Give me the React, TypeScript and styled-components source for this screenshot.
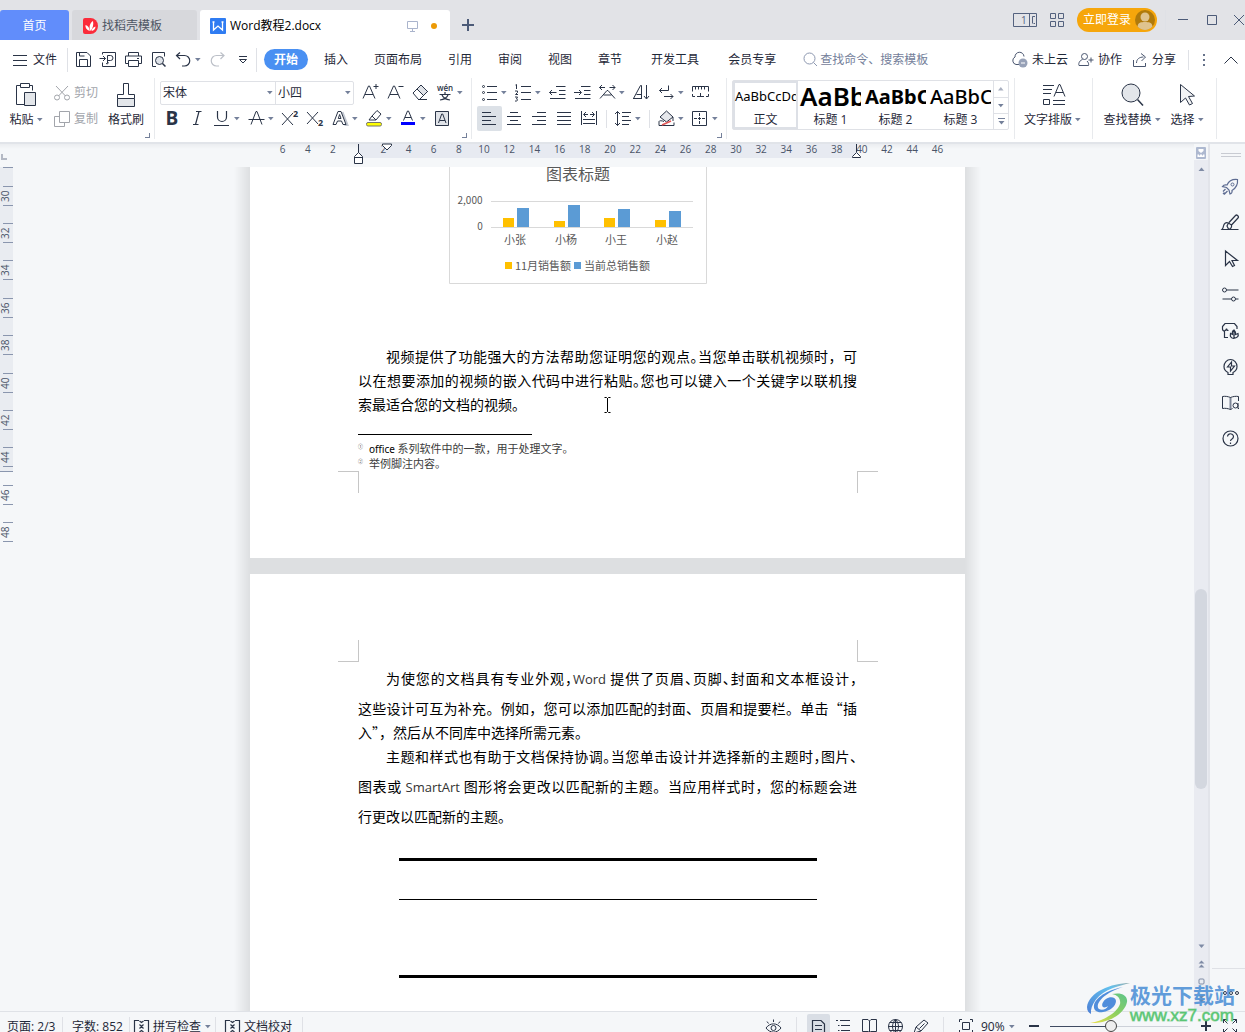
import React from "react";
import styled, { createGlobalStyle, css } from "styled-components";

const INK = "#2a3447";
const MUTED = "#74809a";
const LINE = "#dfe1e6";
const UI = '"Open Sans", "Noto Sans CJK SC", sans-serif';
const DOC = '"Noto Sans CJK SC", sans-serif';

const Global = createGlobalStyle`
  * { box-sizing: border-box; }
  body { margin: 0; overflow: hidden; font-family: ${UI}; font-size: 12px; line-height: 18px; color: #1f2838; }
  button, input, select { font: inherit; color: inherit; margin: 0; padding: 0; border: 0; background: none; }
  svg { display: block; flex: none; }
`;

const Shell = styled.div`
  position: relative;
  height: 100vh;
  display: flex;
  flex-direction: column;
  overflow: hidden;
  background: #f5f7f9;
`;

/* ---------- shared pieces ---------- */

const Svg = styled.svg<{ $tone?: string }>`
  fill: none;
  stroke: ${(p) => p.$tone ?? INK};
  stroke-width: 1;
  overflow: visible;
  text { stroke: none; fill: ${(p) => p.$tone ?? INK}; font-family: ${UI}; }
`;

type IconProps = { w?: number; h?: number; tone?: string; children: React.ReactNode };
const Icon = ({ w = 21, h = 21, tone, children }: IconProps) => (
  <Svg width={w} height={h} viewBox={`0 0 ${w} ${h}`} $tone={tone} aria-hidden="true">
    {children}
  </Svg>
);

const Caret = () => (
  <svg width="6" height="4" viewBox="0 0 6 4" aria-hidden="true">
    <path d="M0 0h5.600L2.800 3.200z" fill={MUTED} />
  </svg>
);

const ToolButton = styled.button<{ $active?: boolean; $split?: boolean }>`
  width: ${(p) => (p.$split ? 34 : 25)}px;
  height: 25px;
  padding: 0 2px;
  display: flex;
  align-items: center;
  flex: none;
  gap: 1px;
  ${(p) => p.$active && css`background: #dce1e7; border-radius: 2px;`}
`;

type ToolProps = { label: string; split?: boolean; active?: boolean; children: React.ReactNode };
const Tool = ({ label, split, active, children }: ToolProps) => (
  <ToolButton type="button" aria-label={label} $split={split} $active={active}>
    {children}
    {split && <Caret />}
  </ToolButton>
);

const VRule = styled.span<{ $h?: number; $gap?: number }>`
  flex: none;
  width: 1px;
  height: ${(p) => p.$h ?? 18}px;
  margin: 0 ${(p) => p.$gap ?? 4}px;
  background: ${LINE};
`;

/* ---------- title bar ---------- */

const TitleBar = styled.header`
  flex: none;
  height: 40px;
  display: flex;
  justify-content: space-between;
  background: #e2e3e7;
  overflow: hidden;
`;
const Tabs = styled.nav`
  display: flex;
  align-items: flex-end;
  gap: 3px;
`;
const FileTab = styled.button<{ $kind: "home" | "idle" | "open" }>`
  height: 30px;
  padding-top: 1px;
  display: flex;
  align-items: center;
  gap: 4px;
  border-radius: 3px 3px 0 0;
  ${(p) => p.$kind === "home" && css`width: 69px; justify-content: center; color: #fff; background: #618dfb;`}
  ${(p) => p.$kind === "idle" && css`width: 125px; padding-left: 11px; color: #4d5563; background: #d7d8dc;`}
  ${(p) => p.$kind === "open" && css`width: 250px; padding: 1px 12px 0 10px; background: #fff; color: #000;`}
`;
const TabState = styled.span`
  margin-left: auto;
  display: flex;
  align-items: center;
  gap: 12px;
`;
const NewTab = styled.button`
  width: 30px;
  height: 30px;
  display: grid;
  place-items: center;
`;
const WindowTools = styled.div`
  display: flex;
  align-items: center;
  margin-right: -9px;
`;
const PlainButton = styled.button<{ $w: number }>`
  width: ${(p) => p.$w}px;
  height: 28px;
  display: grid;
  place-items: center;
  flex: none;
`;
const Login = styled.button`
  width: 80px;
  height: 24px;
  margin: 0 8px 0 5px;
  padding: 0 2px 0 6px;
  display: flex;
  align-items: center;
  justify-content: space-between;
  border-radius: 12px;
  background: #f6a60b;
  color: #fff;
  white-space: nowrap;
`;

const TitleArea = () => (
  <TitleBar>
    <Tabs>
      <FileTab type="button" $kind="home">首页</FileTab>
      <FileTab type="button" $kind="idle">
        <svg width="15" height="16" viewBox="0 0 15 16" aria-hidden="true">
          <path d="M0 2Q0 0 2 0h5.500a7.500 8 0 0 1 0 16H2Q0 16 0 14z" fill="#fb2b3a" />
          <path d="M7.600 13C5.500 9 7 5 10 3c.8 4-.2 7-2.400 10zM6.800 13C3.500 12 2 9.500 2.500 7c2.500.5 4 3 4.300 6zM8.500 13c.3-2 1.600-4 4-4.500 0 2.500-1.500 4.300-4 4.500z" fill="#fff" />
        </svg>
        找稻壳模板
      </FileTab>
      <FileTab type="button" $kind="open">
        <svg width="16" height="16" viewBox="0 0 16 16" aria-hidden="true">
          <rect width="16" height="16" rx="1" fill="#2f7cf2" />
          <path d="M2.500 4h2M3.500 4v8l4.500-4 4.500 4V4M11.500 4h2" fill="none" stroke="#fff" strokeWidth="1.300" />
        </svg>
        Word教程2.docx
        <TabState>
          <Icon w={12} h={12} tone="#aab4cc"><path d="M.5 1.500h10v7H.5zM5.500 9v2M3 11.500h5" /></Icon>
          <svg width="7" height="6" viewBox="0 0 7 6" aria-hidden="true"><circle cx="3" cy="3" r="3" fill="#ec9a05" /></svg>
        </TabState>
      </FileTab>
      <NewTab type="button" aria-label="新建标签">
        <Icon w={12} h={12} tone="#4c5b78"><path d="M6 0v12M0 6h12" strokeWidth="2" /></Icon>
      </NewTab>
    </Tabs>
    <WindowTools>
      <PlainButton type="button" aria-label="窗口布局" $w={34}>
        <Icon w={24} h={14} tone="#54627f">
          <path d="M.5.5h23v13H.5zM16.500.5v13M22 3.500h-2.500v7M20.500 10.500h1.500" />
          <text x="8" y="11" fontSize="10">1</text>
        </Icon>
      </PlainButton>
      <PlainButton type="button" aria-label="应用" $w={30}>
        <Icon w={14} h={14} tone="#54627f"><path d="M.5.5h5v5h-5zM8.500.5h5v5h-5zM.5 8.500h5v5h-5zM8.500 8.500h5v5h-5z" /></Icon>
      </PlainButton>
      <Login type="button">
        立即登录
        <svg width="20" height="20" viewBox="0 0 20 20" aria-hidden="true">
          <circle cx="10" cy="10" r="10" fill="#b07a0b" />
          <circle cx="10" cy="7" r="4.500" fill="#dfc38f" />
          <path d="M2.500 16.500C3 12.500 6 12 10 12s7 .5 7.500 4.500A10 10 0 0 1 2.500 16.500z" fill="#dfc38f" />
        </svg>
      </Login>
      <VRule $h={20} $gap={0} />
      <PlainButton type="button" aria-label="最小化" $w={34}>
        <Icon w={10} h={10} tone="#4c5b78"><path d="M0 4.500h10" /></Icon>
      </PlainButton>
      <PlainButton type="button" aria-label="最大化" $w={24}>
        <Icon w={10} h={10} tone="#4c5b78"><path d="M.5.500h9v9h-9z" /></Icon>
      </PlainButton>
      <PlainButton type="button" aria-label="关闭" $w={30}>
        <Icon w={10} h={10} tone="#4c5b78"><path d="M0 0l10 10M10 0L0 10" /></Icon>
      </PlainButton>
    </WindowTools>
  </TitleBar>
);

/* ---------- menu bar ---------- */

const MenuBar = styled.div`
  flex: none;
  height: 38px;
  padding-top: 1px;
  display: flex;
  align-items: center;
  background: #fff;
  white-space: nowrap;
`;
const FileMenu = styled.button`
  display: flex;
  align-items: center;
  gap: 6px;
  padding: 0 10px 0 13px;
`;
const MenuTab = styled.button<{ $wide?: boolean }>`
  height: 25px;
  padding: 1px 13px 0 ${(p) => (p.$wide ? 16 : 13)}px;
`;
const ActiveTab = styled.button`
  width: 44px;
  height: 21px;
  margin: 0 3px 0 6px;
  border-radius: 11px;
  background: #4a90f2;
  color: #fff;
  font-weight: 700;
`;
const Search = styled.label`
  display: flex;
  align-items: center;
  flex: 1;
  gap: 2px;
  margin-left: 14px;
  input { flex: 1; min-width: 60px; width: 60px; outline: 0; }
  input::placeholder { color: ${MUTED}; opacity: 1; }
`;
const Share = styled.button`
  display: flex;
  align-items: center;
  gap: 4px;
  margin-right: 10px;
`;

const MenuArea = () => (
  <MenuBar>
    <FileMenu type="button">
      <Icon w={14} h={12}><path d="M0 1.500h14M0 6.500h14M0 11.500h14" /></Icon>
      文件
    </FileMenu>
    <VRule $h={24} $gap={0} />
    <VRule $h={0} $gap={1} />
    <Tool label="保存"><Icon><path d="M3.500 3.500h10.500l3.500 3.500v10.500h-14zM6.500 17.500V10.500h8v7M6.500 3.500v3.500h5" /></Icon></Tool>
    <Tool label="输出为PDF"><Icon><path d="M4.500 5.500v-2h13v14h-13v-4M1.500 9.500h6M5 7l2.500 2.500L5 12M9.500 14V6.500h3a2 2 0 0 1 0 5h-3M8 14.500c2 1 3-.5 1.500-2" /></Icon></Tool>
    <Tool label="打印"><Icon><path d="M5.500 7v-3.500h10v3.500M5.500 14.500h-3v-7.500h16v7.500h-3M5.500 11.500h10v6h-10zM14 9.500h2" /></Icon></Tool>
    <Tool label="打印预览"><Icon><path d="M8 17.500H4.500v-14h12v4" /><circle cx="11.500" cy="11.500" r="4" fill="#dfe3e9" /><path d="M14.500 14.500l3 3" strokeWidth="1.500" /></Icon></Tool>
    <Tool label="撤销" split><Icon><path d="M7 3.500L3.500 6.500 7 10M4 6.500h7.500a5 5 0 0 1 0 10.500H9" strokeWidth="1.200" /></Icon></Tool>
    <Tool label="恢复"><Icon tone="#bcc0c8"><path d="M13.500 3.500L17 6.500 13.500 10M16.500 6.500H9.500a5 5 0 0 0 0 10.500H12" strokeWidth="1.200" /></Icon></Tool>
    <Tool label="更多"><Icon><path d="M7 7.500h8M7.500 10.500l3.500 3.500 3.500-3.500z" /></Icon></Tool>
    <VRule $h={24} $gap={1} />
    <ActiveTab type="button">开始</ActiveTab>
    <MenuTab type="button">插入</MenuTab>
    <MenuTab type="button">页面布局</MenuTab>
    <MenuTab type="button">引用</MenuTab>
    <MenuTab type="button">审阅</MenuTab>
    <MenuTab type="button">视图</MenuTab>
    <MenuTab type="button">章节</MenuTab>
    <MenuTab type="button" $wide>开发工具</MenuTab>
    <MenuTab type="button" $wide>会员专享</MenuTab>
    <Search>
      <Icon w={15} h={15} tone="#8d98b0"><circle cx="6.500" cy="6.500" r="5.500" /><path d="M10.500 10.500l3.500 3.500" /></Icon>
      <input type="text" placeholder="查找命令、搜索模板" aria-label="查找命令" />
    </Search>
    <Share type="button">
      <Icon w={17} h={16} tone="#4a566f">
        <path d="M9 12.500H5A4 4 0 0 1 4 5a4.500 4.500 0 0 1 9-.5" />
        <circle cx="12" cy="11" r="4.500" fill="#97a1b7" stroke="none" />
        <path d="M10 11h4" stroke="#fff" />
      </Icon>
      未上云
    </Share>
    <Share type="button">
      <Icon w={16} h={16} tone="#4a566f"><circle cx="6.500" cy="4.500" r="3" /><path d="M4.500 7.500c-4 1.500-4 5-3.500 6h9.500c.4-1.500 0-3-1.500-4.500M13 5.500v5M10.500 8h5" /></Icon>
      协作
    </Share>
    <Share type="button">
      <Icon w={16} h={16} tone="#4a566f"><path d="M1.500 8v6.500h12V11M4.500 11c0-4 3-6 7-6M9 1.500L13.500 5 9.500 9" /></Icon>
      分享
    </Share>
    <VRule $h={20} $gap={2} />
    <PlainButton type="button" aria-label="更多选项" $w={26}>
      <svg width="2" height="12" viewBox="0 0 2 12" aria-hidden="true"><path d="M0 0h2v2H0zM0 5h2v2H0zM0 10h2v2H0z" fill="#66728a" /></svg>
    </PlainButton>
    <PlainButton type="button" aria-label="收起功能区" $w={28}>
      <Icon w={14} h={8}><path d="M.5 7.500L7 1l6.500 6.500" /></Icon>
    </PlainButton>
  </MenuBar>
);

/* ---------- ribbon ---------- */

const Ribbon = styled.div`
  flex: none;
  height: 64px;
  display: flex;
  background: #fff;
  overflow: hidden;
  white-space: nowrap;
`;
const Group = styled.section<{ $l: number; $r: number }>`
  flex: none;
  height: 61px;
  padding: 2px ${(p) => p.$r}px 0 ${(p) => p.$l}px;
  border-right: 1px solid #e8eaed;
`;
const GroupBody = styled.div`
  display: flex;
  height: 52px;
`;
const Rows = styled.div`
  display: grid;
  grid-template-rows: 26px 26px;
`;
const ToolRow = styled.div`
  display: flex;
  align-items: center;
  height: 25px;
`;
const Launcher = styled.button`
  display: block;
  width: 5px;
  height: 5px;
  margin: 1px 0 0 auto;
  border-right: 1px solid ${MUTED};
  border-bottom: 1px solid ${MUTED};
`;
const BigButton = styled.button<{ $w: number }>`
  width: ${(p) => p.$w}px;
  padding-top: 2px;
  display: flex;
  flex-direction: column;
  align-items: center;
`;
const BigLabel = styled.span`
  height: 24px;
  display: flex;
  align-items: center;
  gap: 3px;
`;
const SmallButton = styled.button`
  width: 50px;
  height: 25px;
  padding-left: 2px;
  display: flex;
  align-items: center;
  gap: 4px;
  color: #a2a5ab;
`;
const FontBox = styled.div`
  display: flex;
  height: 24px;
  margin-right: 4px;
  border: 1px solid ${LINE};
  border-radius: 2px;
`;
const Field = styled.label<{ $w: number }>`
  width: ${(p) => p.$w}px;
  padding: 0 2px;
  display: flex;
  align-items: center;
  & + & { border-left: 1px solid ${LINE}; }
  select { flex: 1; min-width: 0; appearance: none; outline: 0; }
`;
const Gallery = styled.div`
  display: flex;
  width: 277px;
  height: 50px;
  border: 1px solid ${LINE};
  border-radius: 2px;
`;
const StyleCard = styled.button<{ $selected?: boolean }>`
  width: 65px;
  overflow: hidden;
  display: grid;
  grid-template-rows: 31px 17px;
  line-height: 16px;
  ${(p) => p.$selected && css`box-shadow: inset 0 0 0 2px #dde0e6;`}
`;
const Sample = styled.span<{ $size: number; $weight: number }>`
  padding-left: 2px;
  margin-right: 2px;
  overflow: hidden;
  text-align: left;
  line-height: 31px;
  color: #000;
  font-family: "Noto Sans", sans-serif;
  font-size: ${(p) => p.$size}px;
  font-weight: ${(p) => p.$weight};
`;
const GalleryNav = styled.div`
  width: 15px;
  display: grid;
  grid-template-rows: 16px 16px 16px;
  border-left: 1px solid ${LINE};
  button { display: grid; place-items: center; }
  button + button { border-top: 1px solid ${LINE}; }
`;

const RibbonArea = () => (
  <Ribbon>
    <Group $l={3} $r={4} aria-label="剪贴板">
      <GroupBody>
        <BigButton type="button" $w={46}>
          <Icon w={26} h={26}>
            <path d="M12 22.500H3.500v-19h4M16.500 3.500h3v5M7.500 1.500h9v4h-9z" />
            <path d="M11.500 10.500h11v13h-11z" fill="#e3e6ea" />
          </Icon>
          <BigLabel>粘贴<Caret /></BigLabel>
        </BigButton>
        <VRule $h={0} $gap={1} />
        <Rows>
          <SmallButton type="button">
            <Icon w={16} h={16} tone="#a2a5ab"><path d="M2 1l9.500 10M14 1L4.500 11" /><circle cx="3" cy="12.500" r="2.500" /><circle cx="13" cy="12.500" r="2.500" /></Icon>
            剪切
          </SmallButton>
          <SmallButton type="button">
            <Icon w={16} h={16} tone="#a2a5ab"><path d="M5.500.5h10v11h-10zM5.500 5.500h-5v10h10v-4" /></Icon>
            复制
          </SmallButton>
        </Rows>
        <BigButton type="button" $w={48}>
          <Icon w={26} h={26}>
            <path d="M4.500 16.500h17v8h-17z" fill="#e3e6ea" />
            <path d="M4.500 16.500v-4h6V1.500h5v11h6v4" />
          </Icon>
          <BigLabel>格式刷</BigLabel>
        </BigButton>
      </GroupBody>
      <Launcher type="button" aria-label="剪贴板设置" />
    </Group>

    <Group $l={5} $r={4} aria-label="字体">
      <GroupBody>
        <Rows>
          <ToolRow>
            <FontBox>
              <Field $w={114}>
                <select aria-label="字体"><option>宋体</option></select>
                <Caret />
              </Field>
              <Field $w={78}>
                <select aria-label="字号"><option>小四</option></select>
                <Caret />
              </Field>
            </FontBox>
            <Tool label="增大字号"><Icon><path d="M3 16.500L8.500 4h1L15 16.500M5 12.500h8M13.500 4.500h5M16 2v5" /></Icon></Tool>
            <Tool label="减小字号"><Icon><path d="M3 16.500L8.500 4h1L15 16.500M5 12.500h8M13.500 4.500h5" /></Icon></Tool>
            <Tool label="清除格式"><Icon><path d="M7 7l4-4 6.500 6.500-4 4z" fill="#dfe2e7" /><path d="M3 11l8-8 6.500 6.500-8 8H8.500zM7 7l6.500 6.500M8 17.500h9" /></Icon></Tool>
            <Tool label="拼音指南" split>
              <Icon>
                <text x="10" y="9" fontSize="8" fontWeight="600" textAnchor="middle">wén</text>
                <path d="M10 10v2.500M4.500 12.500h11M7 13c1 2.500 4 4.500 8 5M13 13c-1 2.500-4 4.500-8 5" strokeWidth="1.200" />
              </Icon>
            </Tool>
          </ToolRow>
          <ToolRow>
            <Tool label="加粗"><Icon><text x="10" y="17" fontSize="19" fontWeight="700" textAnchor="middle">B</text></Icon></Tool>
            <Tool label="倾斜"><Icon><path d="M9 3.500h5.500M6 16.500h5.500M12 3.500L8.500 16.500" strokeWidth="1.200" /></Icon></Tool>
            <Tool label="下划线" split><Icon><path d="M5.500 3v6a4 4 0 0 0 9 0V3M2 17.500h15" strokeWidth="1.200" /></Icon></Tool>
            <Tool label="删除线" split><Icon><path d="M5 16.500L10 3.500h1l5 13M2.500 11.500h16" /></Icon></Tool>
            <Tool label="上标"><Icon><path d="M2 5l11 12M13 5L2 17" /><text x="13" y="8.500" fontSize="9" fontWeight="700">2</text></Icon></Tool>
            <Tool label="下标"><Icon><path d="M2 4l11 12M13 4L2 16" /><text x="13" y="18" fontSize="9" fontWeight="700">2</text></Icon></Tool>
            <Tool label="文字效果" split>
              <Icon><path d="M12.500 4l5 13h-3" stroke="#c3c8d1" strokeWidth="2" /><path d="M3 16.500L8 3.500h3l5 13h-3l-1.500-3.500h-4L6 16.500zM8.300 10.500h2.700L9.600 6.500z" fill="#fff" fillRule="evenodd" /></Icon>
            </Tool>
            <Tool label="突出显示" split>
              <Icon><rect x="2.500" y="14.500" width="15" height="3.500" rx="1.500" fill="#ffff00" stroke="#77776b" /><path d="M8 8l5-5.500L17 6l-5 6zM8 8l4 4H5z" fill="#fff" /></Icon>
            </Tool>
            <Tool label="字体颜色" split><Icon><path d="M5.500 12.500L9.500 3h1l4 9.500M7 9.500h6" /><rect x="3" y="14" width="14" height="3" fill="#0000ff" stroke="none" /></Icon></Tool>
            <Tool label="字符底纹"><Icon><path d="M3.500 3.500h13v14h-13z" fill="#e0e3e8" /><path d="M6.500 15L9.700 6h1l3.300 9M8 12.500h5" /></Icon></Tool>
          </ToolRow>
        </Rows>
      </GroupBody>
      <Launcher type="button" aria-label="字体设置" />
    </Group>

    <Group $l={5} $r={4} aria-label="段落">
      <GroupBody>
        <Rows>
          <ToolRow>
            <Tool label="项目符号" split><Icon><path d="M8 4.500h10M8 10.500h10M8 17.500h10" /><circle cx="4.500" cy="4.500" r="1" /><circle cx="4.500" cy="10.500" r="1" /><circle cx="4.500" cy="17.500" r="1" /></Icon></Tool>
            <Tool label="编号" split>
              <Icon><path d="M8 4.500h10M8 10.500h10M8 17.500h10M2.500 3l1-.5V7M2 9h2.500v1.500l-2 2H5M2 15h2.500L3.500 17c2 .5 1 2.500-1.500 2" /></Icon>
            </Tool>
            <Tool label="减少缩进"><Icon><path d="M9 4.500h9.500M12 8.500h6.500M12 12.500h6.500M3 16.500h15.500M2.500 10.500h7M5 8l-2.500 2.500L5 13" /></Icon></Tool>
            <Tool label="增加缩进"><Icon><path d="M9 4.500h9.500M12 8.500h6.500M12 12.500h6.500M3 16.500h15.500M2 10.500h7M7 8l2.500 2.500L7 13" /></Icon></Tool>
            <Tool label="中文版式" split><Icon><path d="M2.500 5.500H8M12.500 5.500h5.500M5 3L2.500 5.500 5 8M15.500 3L18 5.500 15.500 8M3 16.500l7-8h1l7 8M6.500 13h8" /></Icon></Tool>
            <Tool label="排序"><Icon><path d="M2.500 16.500L9.500 3.500h1v13M5.500 12.500h5M2 16.500h9M15.500 3v13.500M13 14l2.500 3L18 14" /></Icon></Tool>
            <Tool label="显示编辑标记" split><Icon><path d="M12.500 3.500v5h-9M6 6L3.500 8.500 6 11M8 14.500h9M14.500 12l2.500 2.500-2.500 2.500" /></Icon></Tool>
            <Tool label="制表位"><Icon><path d="M2.500 9.500v-5h16v5M5.500 4.500v3M8.500 4.500v3M11.500 4.500v3M14.500 4.500v3M2.500 12v2.500H5M7 14.500h7M10.500 11v3.500M16 14.500h2.500V12" /></Icon></Tool>
          </ToolRow>
          <ToolRow>
            <Tool label="左对齐" active><Icon><path d="M3 4.500h9M3 8.500h14M3 12.500h9M3 16.500h14" /></Icon></Tool>
            <Tool label="居中"><Icon><path d="M6 4.500h8M3 8.500h14M6 12.500h8M3 16.500h14" /></Icon></Tool>
            <Tool label="右对齐"><Icon><path d="M8 4.500h9M3 8.500h14M8 12.500h9M3 16.500h14" /></Icon></Tool>
            <Tool label="两端对齐"><Icon><path d="M3 4.500h14M3 8.500h14M3 12.500h14M3 16.500h14" /></Icon></Tool>
            <Tool label="分散对齐"><Icon><path d="M2.500 3v14M17.500 3v14M5 6.500h4M11 6.500h4M7 4L4.500 6.500 7 9M13 4l2.500 2.500L13 9M4 11.500h12M4 15.500h12" /></Icon></Tool>
            <VRule />
            <Tool label="行距" split><Icon><path d="M4.500 3.500v14M2 6l2.500-2.500L7 6M2 15l2.500 2.500L7 15M9 4.500h9M9 8.500h7M9 12.500h9M9 16.500h7" /></Icon></Tool>
            <VRule />
            <Tool label="底纹颜色" split><Icon><path d="M4 9l6.500-6L17 9l-6.500 5z" fill="#e6e8ec" /><path d="M17 9v4M3 13.500c0-1 3-1 5 0M3 13.500v4h15v-3" /><path d="M6 17l9-4" stroke="#e25555" strokeWidth="1.500" /></Icon></Tool>
            <Tool label="边框" split><Icon><path d="M2.500 3.500h14v14h-14z" /><path d="M9.500 5v11M4 10.500h11" strokeDasharray="3 1" /></Icon></Tool>
          </ToolRow>
        </Rows>
      </GroupBody>
      <Launcher type="button" aria-label="段落设置" />
    </Group>

    <Group $l={5} $r={5} aria-label="样式">
      <Gallery>
        <StyleCard type="button" $selected><Sample $size={13} $weight={400}>AaBbCcDd</Sample>正文</StyleCard>
        <StyleCard type="button"><Sample $size={26} $weight={600}>AaBb</Sample>标题 1</StyleCard>
        <StyleCard type="button"><Sample $size={20} $weight={700}>AaBbC</Sample>标题 2</StyleCard>
        <StyleCard type="button"><Sample $size={20} $weight={500}>AaBbC</Sample>标题 3</StyleCard>
        <GalleryNav>
          <button type="button" aria-label="上一行"><svg width="6" height="4" viewBox="0 0 6 4"><path d="M0 3.500h5.600L2.800 0z" fill="#a9b0c0" /></svg></button>
          <button type="button" aria-label="下一行"><Caret /></button>
          <button type="button" aria-label="更多样式"><svg width="7" height="7" viewBox="0 0 7 7"><path d="M0 0h7v1H0zM.5 3h6L3.500 6.500z" fill={MUTED} /></svg></button>
        </GalleryNav>
      </Gallery>
    </Group>

    <Group $l={3} $r={5} aria-label="排版">
      <BigButton type="button" $w={69}>
        <Icon w={26} h={26}><path d="M3 3.500h11M3 7.500h9M3 11.500h8M3.500 17.500h6v5h-6zM14 14.500L19 2.500h1l5 12M16 10.500h7M13 18.500h12M13 22.500h12" /></Icon>
        <BigLabel>文字排版<Caret /></BigLabel>
      </BigButton>
    </Group>

    <Group $l={8} $r={5} aria-label="编辑">
      <GroupBody>
        <BigButton type="button" $w={62}>
          <Icon w={26} h={26}><circle cx="12" cy="11" r="9" fill="#e3e6ea" /><path d="M18.500 17.500l5.500 6" strokeWidth="1.500" /></Icon>
          <BigLabel>查找替换<Caret /></BigLabel>
        </BigButton>
        <BigButton type="button" $w={48}>
          <Icon w={26} h={26}><path d="M6.500 2.500v18l5-4.500 4 7 3-1.500-4-7 6-.5z" fill="#f2f3f5" /></Icon>
          <BigLabel>选择<Caret /></BigLabel>
        </BigButton>
      </GroupBody>
    </Group>
  </Ribbon>
);

/* ---------- rulers ---------- */

const Work = styled.div`
  flex: 1;
  min-height: 0;
  display: flex;
  border-top: 2px solid #e1e4e9;
`;
const Main = styled.main`
  flex: 1;
  min-width: 0;
  display: flex;
  flex-direction: column;
`;
const TopRuler = styled.div`
  flex: none;
  height: 23px;
  padding-left: 21px;
  position: relative;
  display: flex;
  justify-content: center;
  background: linear-gradient(#ebedf0, #f5f7f9 5px);
`;
const RulerCorner = styled.span`
  position: absolute;
  left: 1px;
  bottom: 7px;
  width: 6px;
  height: 6px;
  border-left: 2px solid #b4b9c4;
  border-bottom: 2px solid #b4b9c4;
`;
const Track = styled.div`
  position: relative;
  width: 715px;
  height: 14px;
  padding: 0 15px 0 20px;
  display: grid;
  grid-template-columns: repeat(27, 1fr);
  background: linear-gradient(to right, transparent 108px, #e7eaf1 108px, #e7eaf1 608px, transparent 608px);
  color: #4a5468;
  font-size: 10px;
  line-height: 11px;
  text-align: center;
`;
const Marker = styled.span<{ $x: number }>`
  position: absolute;
  left: ${(p) => p.$x}px;
  top: 0;
`;
const SideRuler = styled.div`
  flex: none;
  width: 13px;
  display: flex;
  flex-direction: column;
  background: linear-gradient(#e9ecf1 304px, #8a96ae 304px, #8a96ae 305px, #f5f7f9 305px);
`;
const Scale = styled.div`
  height: 384px;
  padding-top: 9px;
  display: grid;
  grid-template-rows: repeat(10, 1fr);
  align-items: center;
  border-top: 1px solid #8a96ae;
  margin-left: 3px;
  color: #4a5468;
  font-size: 10px;
`;
const Mark = styled.span`
  width: 10px;
  height: 20px;
  padding-left: 6px;
  display: grid;
  grid-template-rows: 4px;
  place-items: center;
  border: solid #8a96ae;
  border-width: 1px 0;
  writing-mode: vertical-rl;
  transform: rotate(180deg);
  line-height: 10px;
`;

const topNumbers = Array.from({ length: 27 }, (_, i) => Math.abs(i * 2 - 6));
const sideNumbers = [30, 32, 34, 36, 38, 40, 42, 44, 46, 48];

/* ---------- document ---------- */

const Desk = styled.div`
  flex: 1;
  min-height: 0;
  display: flex;
`;
const Canvas = styled.div`
  flex: 1;
  min-width: 0;
  padding-left: 8px;
  display: flex;
  justify-content: center;
  overflow: hidden;
`;
const Stack = styled.div`
  flex: none;
  width: 747px;
  padding: 0 16px;
  display: flex;
  flex-direction: column;
  gap: 16px;
  background: linear-gradient(to right, #f5f7f9, #dddfe1 16px, #dddfe1 calc(100% - 16px), #f5f7f9);
`;
const Page = styled.article<{ $top: number; $bottom: number }>`
  position: relative;
  padding: ${(p) => p.$top}px 0 ${(p) => p.$bottom}px;
  background: #fff;
  font-family: ${DOC};
  color: #000;
`;
const LastPage = styled(Page)`
  flex: 1;
`;
const Chart = styled.svg`
  margin-left: 199px;
  text { font-family: ${DOC}; fill: #595959; font-size: 11px; text-anchor: middle; }
`;
const Body = styled.div<{ $gap: number }>`
  margin: ${(p) => p.$gap}px 108px 0 108px;
`;
const TextLine = styled.p<{ $indent?: boolean; $loose?: boolean; $end?: boolean }>`
  margin: ${(p) => (p.$loose ? 6 : 0)}px 0 0;
  font-size: 14px;
  line-height: 24px;
  white-space: nowrap;
  text-indent: ${(p) => (p.$indent ? "2em" : "0")};
  text-align: justify;
  text-align-last: ${(p) => (p.$end ? "left" : "justify")};
`;
const Half = styled.span`
  font-feature-settings: "halt";
`;
const Latin = styled.span`
  font-family: "Open Sans", sans-serif;
  font-size: 13px;
  line-height: 13px;
  color: #333;
`;
const Corners = styled.div<{ $foot?: boolean }>`
  display: flex;
  justify-content: space-between;
  padding: 0 87px 0 88px;
  span {
    width: 21px;
    height: 22px;
    border: 0 solid #c6c6c6;
    border-${(p) => (p.$foot ? "top" : "bottom")}-width: 1px;
  }
  span:first-child { border-right-width: 1px; }
  span:last-child { border-left-width: 1px; }
`;
const NoteRule = styled.hr`
  width: 174px;
  height: 1px;
  margin: 18px 0 6px;
  border: 0;
  background: #000;
`;
const Note = styled.p`
  display: flex;
  gap: 6px;
  margin: 0;
  height: 15px;
  font-size: 11px;
  line-height: 15px;
  color: #3c3c3c;
  sup { font-size: 5px; line-height: 10px; width: 5px; }
  b { font-weight: 400; font-family: "Noto Sans", sans-serif; font-size: 10px; line-height: 10px; color: #000; }
`;
const RuledTable = styled.table`
  width: 418px;
  margin: 30px 0 0 149px;
  border-spacing: 0;
  border-top: 3px solid #000;
  border-bottom: 3px solid #000;
  td { padding: 0; }
`;
const Cell = styled.td<{ $h: number; $line?: boolean }>`
  height: ${(p) => p.$h}px;
  border-bottom: ${(p) => (p.$line ? "1px solid #000" : "0")};
`;
const Pointer = styled.svg`
  position: absolute;
  left: 354px;
  top: 230px;
`;

const people = [
  { name: "小张", x: 66, month: 9, total: 19 },
  { name: "小杨", x: 117, month: 6, total: 22 },
  { name: "小王", x: 167, month: 9, total: 18 },
  { name: "小赵", x: 218, month: 7, total: 16 },
];

const SalesChart = () => (
  <Chart width="259" height="117" viewBox="0 0 259 117" role="img" aria-label="图表标题">
    <path d="M.5 0v116.500h257V0" fill="none" stroke="#d9d9d9" />
    <text x="129" y="13" style={{ fontSize: 16 }}>图表标题</text>
    <path d="M42 34.500h202M42 60.500h202" stroke="#d9d9d9" />
    <text x="21" y="37" style={{ fontSize: 10 }}>2,000</text>
    <text x="31" y="63" style={{ fontSize: 10 }}>0</text>
    {people.map((p) => (
      <g key={p.name}>
        <rect x={p.x - 12} y={60 - p.month} width="11" height={p.month} fill="#ffc000" />
        <rect x={p.x + 2} y={60 - p.total} width="12" height={p.total} fill="#5b9bd5" />
        <text x={p.x} y="77">{p.name}</text>
      </g>
    ))}
    <rect x="56" y="95" width="7" height="7" fill="#ffc000" />
    <text x="94" y="103">11月销售额</text>
    <rect x="125" y="95" width="7" height="7" fill="#5b9bd5" />
    <text x="168" y="103">当前总销售额</text>
  </Chart>
);

const DocumentArea = () => (
  <Canvas lang="zh-CN">
    <Stack>
      <Page $top={0} $bottom={65}>
        <SalesChart />
        <Body $gap={60}>
          <TextLine $indent>视频提供了功能强大的方法帮助您证明您的观点<Half>。</Half>当您单击联机视频时，可</TextLine>
          <TextLine>以在想要添加的视频的嵌入代码中进行粘贴<Half>。</Half>您也可以键入一个关键字以联机搜</TextLine>
          <TextLine $end>索最适合您的文档的视频。</TextLine>
          <NoteRule />
          <Note><sup>①</sup><span><b>office</b> 系列软件中的一款，用于处理文字。</span></Note>
          <Note><sup>②</sup><span>举例脚注内容。</span></Note>
        </Body>
        <Corners $foot><span /><span /></Corners>
        <Pointer width="8" height="16" viewBox="0 0 8 16" aria-hidden="true">
          <path d="M.5.500h2l1 1 1-1h2M3.500 1v13.500M.5 15.500h2l1-1 1 1h2" fill="none" stroke="#000" />
        </Pointer>
      </Page>
      <LastPage $top={66} $bottom={0}>
        <Corners><span /><span /></Corners>
        <Body $gap={4}>
          <TextLine $indent>为使您的文档具有专业外观<Half>，</Half><Latin>Word </Latin> 提供了页眉<Half>、</Half>页脚<Half>、</Half>封面和文本框设计<Half>，</Half></TextLine>
          <TextLine $loose>这些设计可互为补充。例如，您可以添加匹配的封面、页眉和提要栏。单击“插</TextLine>
          <TextLine $end>入”，然后从不同库中选择所需元素。</TextLine>
          <TextLine $indent>主题和样式也有助于文档保持协调<Half>。</Half>当您单击设计并选择新的主题时<Half>，</Half>图片<Half>、</Half></TextLine>
          <TextLine $loose>图表或 <Latin>SmartArt</Latin> 图形将会更改以匹配新的主题。当应用样式时，您的标题会进</TextLine>
          <TextLine $loose $end>行更改以匹配新的主题。</TextLine>
        </Body>
        <RuledTable>
          <tbody>
            <tr><Cell $h={39} $line /></tr>
            <tr><Cell $h={75} /></tr>
          </tbody>
        </RuledTable>
      </LastPage>
    </Stack>
  </Canvas>
);

/* ---------- scroll bar and side panel ---------- */

const ScrollColumn = styled.div`
  flex: none;
  width: 16px;
  display: flex;
  flex-direction: column;
  border-right: 2px solid #e2e4ea;
`;
const RulerToggle = styled.button`
  height: 16px;
  padding: 2px 0 0 2px;
`;
const ScrollTrack = styled.div`
  flex: 1;
  padding: 6px 0 8px;
  display: flex;
  flex-direction: column;
  align-items: center;
  gap: 10px;
  background: #e9ebf1;
`;
const Rail = styled.div`
  flex: 1;
  width: 12px;
  display: flex;
  flex-direction: column;
  &::before { content: ""; flex: 405; }
  &::after { content: ""; flex: 143; }
`;
const Thumb = styled.div`
  flex: 200;
  border-radius: 6px;
  background: #d3d7df;
`;
const SidePanel = styled.aside`
  flex: none;
  width: 35px;
  padding: 9px 0 0 2px;
  display: flex;
  flex-direction: column;
`;
const Grip = styled.span`
  width: 20px;
  height: 4px;
  margin: 0 0 11px 9px;
  border: 1px solid #c8cbd2;
  border-width: 1px 0;
`;
const SideButton = styled.button`
  height: 36px;
  padding-left: 8px;
  display: flex;
  align-items: center;
`;
const SideMore = styled.button`
  margin-top: auto;
  height: 43px;
  padding: 6px 0 0 11px;
  display: flex;
  align-items: center;
  border-top: 1px solid ${LINE};
`;

const Triangle = ({ d }: { d: string }) => (
  <svg width="7" height="8" viewBox="0 0 7 8" aria-hidden="true"><path d={d} fill="#7f8ba5" /></svg>
);

const SideArea = () => (
  <SidePanel aria-label="任务窗格">
    <Grip />
    <SideButton type="button" aria-label="快捷"><Icon tone="#5d6c92"><path d="M7 9c2-4.500 5.500-6 10.500-5.500C18 8 16 12 12 14.500c.5 1.500-.5 3-2 3.500l-1-4-2.500-2.500-4-1c1-1.500 2.500-2 4.500-1.500zM5.500 13l-2.500 2.500M7.500 15L4 18.500M3 18l1.500-1.500" strokeWidth="1.200" /><circle cx="12.500" cy="8.500" r="1.500" /></Icon></SideButton>
    <SideButton type="button" aria-label="样式"><Icon><path d="M9 10.500l6.500-7q1-1 2 0l.5.500q1 1 0 2L11.500 13M8.500 11c-3-1-4.500.5-5 3-.2 1.500-.5 2.500-1.500 3.500h6c3-.5 4-2.500 3.500-4.500zM8.500 11l-1.500 3 1.500 3M3 17.500h15.500" strokeWidth="1.200" /></Icon></SideButton>
    <SideButton type="button" aria-label="选择"><Icon><path d="M5.500 3v14.500l4-4 3 5 2-1-2.500-5h5.500z" strokeWidth="1.200" /></Icon></SideButton>
    <SideButton type="button" aria-label="属性"><Icon><circle cx="4.500" cy="6" r="2" /><circle cx="13.500" cy="15" r="2" /><path d="M6.500 6h12M2.500 15h9M15.500 15h3" strokeWidth="1.200" /></Icon></SideButton>
    <SideButton type="button" aria-label="素材"><Icon><path d="M8 17.500H4.500V11M4.500 11c-1.500 0-2-1-2-2V6.500L5 3.500h9.500l2.500 3V9M4.500 10.500c1.500 0 2-.5 2-2 0 1.500.5 2 2 2" strokeWidth="1.200" /><path d="M13.500 18.500c-3-.5-3.500-2.500-3-5l2 1c-.5-2 .5-4 1.500-4.500 1 1 2 2.500 1.500 4.500l2.500-1c1 3-1 4.500-4.500 5zM14 11v7" strokeWidth="1.200" /></Icon></SideButton>
    <SideButton type="button" aria-label="智能"><Icon><path d="M8 16.500v2h5v-2c3-1.500 4-3.500 4-6a6.500 7 0 0 0-13 0c0 2.500 1 4.500 4 6zM11.500 6L7.500 11h3v4l4-5h-3z" strokeWidth="1.200" /></Icon></SideButton>
    <SideButton type="button" aria-label="词典"><Icon><path d="M10.500 5.500c-2.500-1-5-1.500-8-1v12c3-.5 5.500 0 8 1zM10.500 5.500c2.500-1 5-1.500 8-1V9M10.500 17.500l2-1" /><path d="M10.500 6v11" stroke="#7c8596" strokeWidth="2" /><circle cx="15.500" cy="13.500" r="2.500" /><path d="M18 11v5.500h1" /></Icon></SideButton>
    <SideButton type="button" aria-label="帮助"><Icon><circle cx="10.500" cy="10.500" r="7.500" strokeWidth="1.200" /><path d="M7.500 8.500a3 2.800 0 1 1 4.500 2.500c-1 .6-1.500 1-1.500 2M10.500 14.500v1.500" strokeWidth="1.200" /></Icon></SideButton>
    <SideMore type="button" aria-label="更多">
      <Icon w={17} h={6}><circle cx="2" cy="3" r="1.500" /><circle cx="8" cy="3" r="1.500" /><circle cx="14" cy="3" r="1.500" /></Icon>
    </SideMore>
  </SidePanel>
);

/* ---------- status bar ---------- */

const StatusBar = styled.footer`
  flex: none;
  height: 21px;
  overflow: hidden;
  border-top: 1px solid #dfe2e7;
  background: #f5f7f9;
`;
const StatusRow = styled.div`
  height: 28px;
  display: flex;
  align-items: center;
  justify-content: space-between;
  white-space: nowrap;
`;
const StatusSide = styled.div<{ $pad?: number }>`
  display: flex;
  align-items: center;
  padding-left: ${(p) => p.$pad ?? 0}px;
`;
const StatusItem = styled.button<{ $w: number; $pad?: number }>`
  width: ${(p) => p.$w}px;
  padding: 1px 0 0 ${(p) => p.$pad ?? 0}px;
  display: flex;
  align-items: center;
  gap: 4px;
`;
const ViewButton = styled.button<{ $active?: boolean }>`
  width: 26px;
  height: 24px;
  display: grid;
  place-items: center;
  ${(p) => p.$active && css`width: 23px; background: #d9dee5; border-radius: 2px;`}
`;
const Zoom = styled.input`
  width: 138px;
  height: 14px;
  margin: 0 10px;
  appearance: none;
  outline: 0;
  &::-webkit-slider-runnable-track {
    height: 1px;
    background: linear-gradient(to right, #3f4b62 44%, #cdd1d9 44%);
  }
  &::-webkit-slider-thumb {
    appearance: none;
    width: 12px;
    height: 12px;
    margin-top: -6px;
    border: 1px solid #444;
    border-radius: 50%;
    background: #eeeeee;
  }
`;

const checkIcon = (
  <Icon w={15} h={13}><path d="M5 .5H.5v12H5M10 .5h4.500v12H10M5.500 4.500l4 4M9.500 4.500l-4 4M5.500 1l2 1.500 2-1.500M5.500 12l2-1.500 2 1.500" strokeWidth="1.200" /></Icon>
);

const StatusArea = () => (
  <StatusBar>
    <StatusRow>
      <StatusSide $pad={7}>
        <StatusItem type="button" $w={55}>页面: 2/3</StatusItem>
        <VRule $gap={0} />
        <StatusItem type="button" $w={66} $pad={9}>字数: 852</StatusItem>
        <VRule $gap={0} />
        <StatusItem type="button" $w={85} $pad={4}>{checkIcon}拼写检查<Caret /></StatusItem>
        <VRule $gap={0} />
        <StatusItem type="button" $w={86} $pad={9}>{checkIcon}文档校对</StatusItem>
        <VRule $gap={0} />
      </StatusSide>
      <StatusSide>
        <ViewButton type="button" aria-label="护眼模式"><Icon w={17} h={15}><path d="M1 9c4-5.500 11-5.500 15 0-4 5.500-11 5.500-15 0zM8.500 3V.500M3.500 4.500L2 2.500M13.500 4.500l1.500-2" /><circle cx="8.500" cy="9" r="2.500" /></Icon></ViewButton>
        <VRule $gap={10} />
        <ViewButton type="button" aria-label="页面视图" $active><Icon w={13} h={15}><path d="M.5 1.500h8.500l3.500 3.500v9.500H.5zM3 6.500h7M3 10.500h7" strokeWidth="1.200" /></Icon></ViewButton>
        <ViewButton type="button" aria-label="大纲"><Icon w={14} h={12}><path d="M4 .5h10M5 5.500h9M5 10.500h9M0 .5h2M2 5.500h1.500M2 10.500h1.500" /></Icon></ViewButton>
        <ViewButton type="button" aria-label="阅读版式"><Icon w={15} h={14}><path d="M7.500 2L6 .5H.5v12H6l1.500 1 1.500-1h5.500V.5H9zM7.500 2v11" /></Icon></ViewButton>
        <ViewButton type="button" aria-label="Web版式"><Icon w={15} h={15}><circle cx="7.500" cy="7.500" r="7" /><path d="M0 7.500h15M1.500 3.500h12M1.500 11.500h12M7.500.5v14M7.500.5c-4 4-4 10 0 14 4-4 4-10 0-14z" /></Icon></ViewButton>
        <ViewButton type="button" aria-label="写作模式"><Icon w={16} h={15}><path d="M1 14l2-6 8-7 4 3-7 8zM3 8l5 4M6.500 9.500l5-5" /></Icon></ViewButton>
        <VRule $gap={9} />
        <ViewButton type="button" aria-label="适合页宽"><Icon w={14} h={14}><path d="M.5 3V.5H3M11 .5h2.500V3M.5 11v2.500H3M11 13.500h2.500V11M3.500 3.500h7v7h-7z" /></Icon></ViewButton>
        <StatusItem type="button" $w={50} $pad={2}>90%<Caret /></StatusItem>
        <Icon w={11} h={11}><path d="M0 5h10" strokeWidth="2" /></Icon>
        <Zoom type="range" min={0} max={100} defaultValue={44} aria-label="显示比例" />
        <Icon w={16} h={11}><path d="M3 5h10M8 0v10" strokeWidth="2" /></Icon>
        <VRule $h={0} $gap={4} />
        <Icon w={22} h={15}><path d="M.5 4V.5H4M.5.5l4 4M10 .5h3.500V4M13.500.5l-4 4M.5 10v3.500H4M.5 13.500l4-4M10 13.500h3.500V10M13.500 13.500l-4-4" /></Icon>
      </StatusSide>
    </StatusRow>
  </StatusBar>
);

/* ---------- site badge over the lower right corner ---------- */

const Badge = styled.div`
  position: absolute;
  right: 10px;
  bottom: 5px;
  display: flex;
  pointer-events: none;
`;
const BadgeText = styled.div`
  display: grid;
  grid-template-rows: 22px 22px;
  span { font: 700 21px/22px ${DOC}; color: rgba(76, 143, 214, 0.88); }
  em { font: 400 17px/22px "Liberation Sans", sans-serif; color: rgba(86, 196, 112, 0.95); -webkit-text-stroke: 1px rgba(86, 196, 112, 0.6); }
`;

const SiteBadge = () => (
  <Badge>
    <svg width="43" height="42" viewBox="0 0 43 42" aria-hidden="true">
      <defs>
        <linearGradient id="sky" x1="0" y1="1" x2="1" y2="0"><stop offset="0" stopColor="#4c7fd6" /><stop offset=".7" stopColor="#62c0ee" /><stop offset="1" stopColor="#9bb0ae" /></linearGradient>
        <linearGradient id="leaf" x1="0" y1="1" x2="1" y2="0"><stop offset="0" stopColor="#efe14a" /><stop offset=".5" stopColor="#8fd05e" /><stop offset="1" stopColor="#5cc48a" /></linearGradient>
      </defs>
      <path d="M43 0C24 0 2 9 0 24c0 4 2 6 4 7C3 22 11 10 26 5c6-2 12-4 17-5z" fill="url(#sky)" />
      <path d="M36 4C24 6 9 13 7 22c-1 6 4 8 9 7 7-1 13-6 13-11 0-4-6-5-10-2-3 2-5 6-3 8 1 1 4 0 5-1-1 3-6 5-9 3-4-4 2-15 24-22z" fill="#4f8ddb" />
      <path d="M25 11c9-2 16 1 15 8-2 11-18 22-37 21 13-2 27-10 30-19 1-5-2-9-8-10z" fill="url(#leaf)" />
    </svg>
    <BadgeText><span>极光下载站</span><em>www.xz7.com</em></BadgeText>
  </Badge>
);

export default function App() {
  return (
    <Shell>
      <Global />
      <TitleArea />
      <MenuArea />
      <RibbonArea />
      <Work>
        <Main>
          <TopRuler>
            <RulerCorner />
            <Track>
              {topNumbers.map((n, i) => <span key={i}>{n === 0 ? "" : n}</span>)}
              <Marker $x={103}><Icon w={11} h={22}><path d="M5.500 0v9" /><path d="M1.500 12.500L5.500 8.500l4 4v7h-8zM1.500 13.500h8" fill="#fff" /></Icon></Marker>
              <Marker $x={132}><Icon w={11} h={8}><path d="M.5 0h9v1.500L5 6 .5 1.500z" fill="#fff" /></Icon></Marker>
              <Marker $x={601}><Icon w={11} h={16}><path d="M5.500 0v8M1.500 12.500L5.500 8.500l4 4v1h-8z" fill="#fff" /></Icon></Marker>
            </Track>
          </TopRuler>
          <Desk>
            <SideRuler>
              <Scale>
                {sideNumbers.map((n) => <Mark key={n}>{n}</Mark>)}
              </Scale>
            </SideRuler>
            <DocumentArea />
          </Desk>
        </Main>
        <ScrollColumn>
          <RulerToggle type="button" aria-label="标尺">
            <svg width="10" height="12" viewBox="0 0 10 12" aria-hidden="true"><rect width="10" height="12" rx="1" fill="#aeb9d0" /><path d="M2.500 2h5v2L5 6 2.500 4zM1.500 7.500h7V10h-7z" fill="#fff" /><path d="M3.500 7v1.500M6.500 7v1.500" stroke="#aeb9d0" /></svg>
          </RulerToggle>
          <ScrollTrack>
            <Triangle d="M.5 5L3.500 1.500 6.500 5z" />
            <Rail><Thumb /></Rail>
            <Triangle d="M.5 2.500h6L3.500 6z" />
            <Triangle d="M.5 3.500L3.500.5l3 3zM.5 7.500l3-3 3 3z" />
            <svg width="7" height="7" viewBox="0 0 7 7" aria-hidden="true"><rect x="1" y="1" width="5" height="5" rx="1" fill="none" stroke="#7f8ba5" /></svg>
            <Triangle d="M.5.5h6l-3 3zM.5 4.500h6l-3 3z" />
          </ScrollTrack>
        </ScrollColumn>
        <SideArea />
      </Work>
      <StatusArea />
      <SiteBadge />
    </Shell>
  );
}
